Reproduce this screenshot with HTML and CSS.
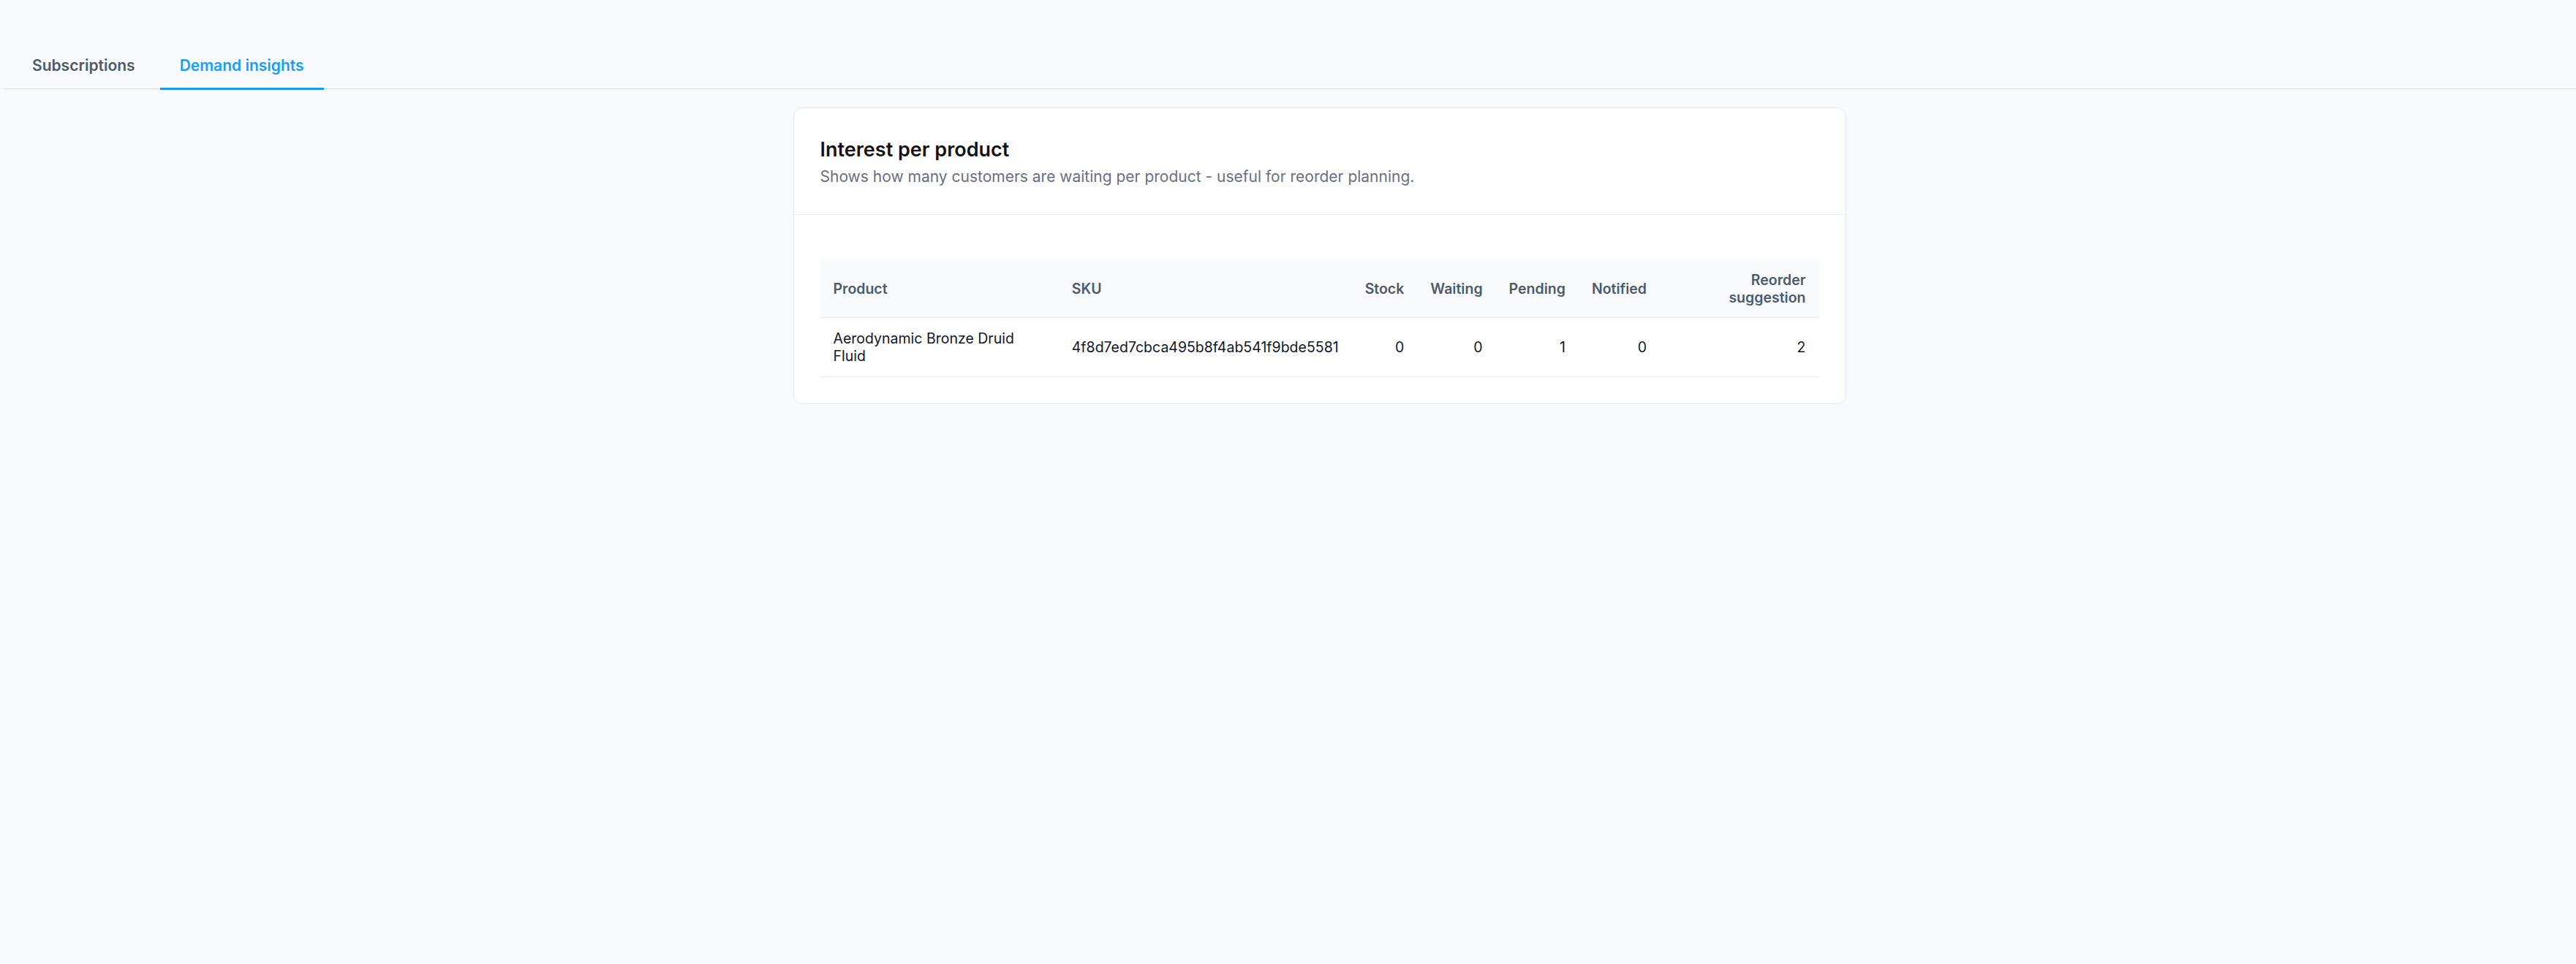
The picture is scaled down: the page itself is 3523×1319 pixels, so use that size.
FILE: index.html
```html
<!DOCTYPE html>
<html>
<head>
    <title>Back in stock - Demand insights</title>
    <link rel="stylesheet" href="styles.css">
</head>
<body>
    <div class="tabs">
        <button class="tab">Subscriptions</button>
        <button class="tab active">Demand insights</button>
    </div>

    <div class="content">
        <div class="card">
            <div class="card-head">
                <h2>Interest per product</h2>
                <p>Shows how many customers are waiting per product - useful for reorder planning.</p>
            </div>
            <div class="card-body">
                <table class="insights">
                    <thead>
                        <tr>
                            <th>Product</th>
                            <th>SKU</th>
                            <th class="num">Stock</th>
                            <th class="num">Waiting</th>
                            <th class="num">Pending</th>
                            <th class="num">Notified</th>
                            <th class="num">Reorder suggestion</th>
                        </tr>
                    </thead>
                    <tbody>
                        <tr>
                            <td>Aerodynamic Bronze Druid Fluid</td>
                            <td>4f8d7ed7cbca495b8f4ab541f9bde5581</td>
                            <td class="num">0</td>
                            <td class="num">0</td>
                            <td class="num">1</td>
                            <td class="num">0</td>
                            <td class="num">2</td>
                        </tr>
                    </tbody>
                </table>
            </div>
        </div>
    </div>
</body>
</html>
```

FILE: styles.css
```css
body { margin: 0; background: #f8fafd; font-family: Inter, "Noto Sans", sans-serif; color: #0f172a; }

.tabs { display: flex; gap: 7px; margin: 60px 0 0 5px; padding-left: 12px; border-bottom: 1px solid #cfd9e2; }
.tab { font-family: inherit; font-size: 21px; font-weight: 600; line-height: 30px; color: #4b5a6c; background: none; border: none; border-bottom: 3px solid transparent; padding: 15px 27px; margin-bottom: -2px; cursor: pointer; }
.tab.active { color: #189dfb; border-bottom-color: #189dfb; }

.content { padding-left: 86px; }
.card { width: 1440px; box-sizing: border-box; margin: 25px auto 0; background: #fff; border: 1px solid #e3e8ef; border-radius: 12px; }
.card-head { padding: 36px 36px 36px; border-bottom: 1px solid #e8ecf1; }
.card-head h2 { margin: 0; font-size: 27px; line-height: 42px; font-weight: 600; color: #111318; }
.card-head p { margin: 1px 0 0; font-size: 21px; line-height: 30px; color: #667085; }
.card-body { padding: 61px 36px 36px; }

.insights { width: 100%; border-collapse: collapse; font-size: 19.5px; }
.insights th { background: #f8fafc; color: #4b5a6c; font-weight: 600; text-align: left; padding: 15.5px 18px; border-bottom: 1px solid #e6ebf0; }
.insights td { padding: 16px 18px; border-bottom: 1px solid #e9edf2; }
.insights .num { text-align: right; }
```
